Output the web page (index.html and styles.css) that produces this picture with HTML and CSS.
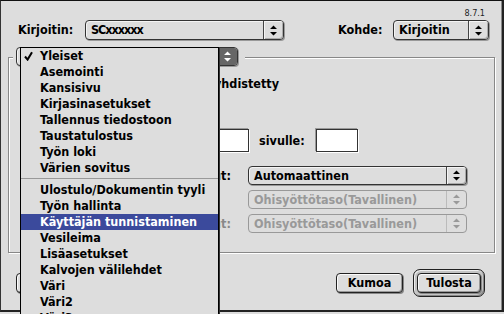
FILE: index.html
```html
<!DOCTYPE html>
<html lang="fi">
<head>
<meta charset="utf-8">
<title>Tulosta</title>
<link rel="stylesheet" href="styles.css">
</head>
<body>
<div class="window">
  <div class="version">8.7.1</div>
  <div class="toolbar">
    <span class="lbl lbl-printer">Kirjoitin:</span>
    <div class="popup popup-printer">
      <span class="popup-text tight">SCxxxxxx</span>
      <span class="popup-arrow"><svg width="7" height="11" viewBox="0 0 7 11"><path d="M3.5 0.5L7 4H0Z M0 7H7L3.5 10.5Z"/></svg></span>
    </div>
    <span class="lbl lbl-dest">Kohde:</span>
    <div class="popup popup-dest">
      <span class="popup-text">Kirjoitin</span>
      <span class="popup-arrow"><svg width="7" height="11" viewBox="0 0 7 11"><path d="M3.5 0.5L7 4H0Z M0 7H7L3.5 10.5Z"/></svg></span>
    </div>
  </div>

  <div class="group">
    <div class="group-head">
      <div class="popup popup-panel">
        <span class="popup-text">Yleiset</span>
        <span class="popup-arrow pressed"><svg width="7" height="11" viewBox="0 0 7 11"><path d="M3.5 0.5L7 4H0Z M0 7H7L3.5 10.5Z"/></svg></span>
      </div>
    </div>
    <div class="row-copies">yhdistetty</div>
    <div class="row-pages">
      <span class="field field-from"></span>
      <span class="lbl lbl-to">sivulle:</span>
      <span class="field field-to"></span>
    </div>
    <div class="row-src">
      <span class="src-lbl">Kaikki sivut:</span>
      <div class="popup popup-src">
        <span class="popup-text">Automaattinen</span>
        <span class="popup-arrow"><svg width="7" height="11" viewBox="0 0 7 11"><path d="M3.5 0.5L7 4H0Z M0 7H7L3.5 10.5Z"/></svg></span>
      </div>
    </div>
    <div class="row-src">
      <span class="src-lbl"></span>
      <div class="popup popup-src disabled">
        <span class="popup-text">Ohisyöttötaso(Tavallinen)</span>
        <span class="popup-arrow"><svg width="7" height="11" viewBox="0 0 7 11"><path d="M3.5 0.5L7 4H0Z M0 7H7L3.5 10.5Z"/></svg></span>
      </div>
    </div>
    <div class="row-src">
      <span class="src-lbl dim">Muut sivut:</span>
      <div class="popup popup-src disabled">
        <span class="popup-text">Ohisyöttötaso(Tavallinen)</span>
        <span class="popup-arrow"><svg width="7" height="11" viewBox="0 0 7 11"><path d="M3.5 0.5L7 4H0Z M0 7H7L3.5 10.5Z"/></svg></span>
      </div>
    </div>
  </div>

  <div class="buttons">
    <div class="btn btn-save">Tallenna asetukset</div>
    <span class="spacer"></span>
    <div class="btn btn-cancel">Kumoa</div>
    <div class="default-ring"><div class="btn btn-print">Tulosta</div></div>
  </div>
</div>

<ul class="menu">
  <li class="item"><span class="mark"><svg width="9" height="10" viewBox="0 0 9 10"><path d="M1 5.5L3.6 8.6L8 1.2" fill="none" stroke="#000" stroke-width="2"/></svg></span>Yleiset</li>
  <li class="item"><span class="mark"></span>Asemointi</li>
  <li class="item"><span class="mark"></span>Kansisivu</li>
  <li class="item"><span class="mark"></span>Kirjasinasetukset</li>
  <li class="item"><span class="mark"></span>Tallennus tiedostoon</li>
  <li class="item"><span class="mark"></span>Taustatulostus</li>
  <li class="item"><span class="mark"></span>Työn loki</li>
  <li class="item"><span class="mark"></span>Värien sovitus</li>
  <li class="sep"></li>
  <li class="item"><span class="mark"></span>Ulostulo/Dokumentin tyyli</li>
  <li class="item"><span class="mark"></span>Työn hallinta</li>
  <li class="item hl"><span class="mark"></span>Käyttäjän tunnistaminen</li>
  <li class="item"><span class="mark"></span>Vesileima</li>
  <li class="item"><span class="mark"></span>Lisäasetukset</li>
  <li class="item"><span class="mark"></span>Kalvojen välilehdet</li>
  <li class="item"><span class="mark"></span>Väri</li>
  <li class="item"><span class="mark"></span>Väri2</li>
  <li class="item"><span class="mark"></span>Väri3</li>
</ul>
</body>
</html>
```

FILE: styles.css
```css
html, body {
  margin: 0;
  padding: 0;
}
body {
  width: 504px;
  height: 314px;
  overflow: hidden;
  background: #dddddd;
}
.window, .menu {
  font-family: "DejaVu Sans Condensed", "DejaVu Sans", sans-serif;
  font-stretch: semi-condensed;
  font-weight: bold;
  font-size: 12.5px;
  line-height: 16px;
  color: #000;
}
.window {
  box-sizing: border-box;
  width: 504px;
  height: 312px;
  border-top: 1px solid #111;
  border-left: 1px solid #333;
  border-right: 2px solid #222;
  border-bottom: 2px solid #222;
  box-shadow: inset -1px 0 0 #888;
  background: #dddddd;
}
.version {
  box-sizing: border-box;
  height: 19px;
  padding: 7px 17px 0 0;
  text-align: right;
  font-family: "DejaVu Sans", sans-serif;
  font-weight: normal;
  font-size: 9px;
  line-height: 10px;
  color: #222;
}
.toolbar {
  display: flex;
  align-items: center;
  height: 20px;
  padding-left: 17px;
}
.lbl {
  white-space: nowrap;
}
.lbl-printer {
  width: 67px;
}
.lbl-dest {
  width: 55px;
  margin-left: 54px;
}
.popup {
  display: flex;
  box-sizing: border-box;
  height: 20px;
  border: 1px solid #333;
  border-radius: 4px;
  background: #dddddd;
  box-shadow: inset 1px 1px 0 #f4f4f4, 1px 1px 0 #999;
}
.popup-text {
  flex: 1;
  min-width: 0;
  padding-left: 5px;
  line-height: 18px;
  white-space: nowrap;
  overflow: hidden;
}
.tight {
  letter-spacing: -1px;
}
.popup-arrow {
  display: flex;
  align-items: center;
  justify-content: center;
  width: 19px;
  border-left: 1px solid #444;
  border-radius: 0 3px 3px 0;
  box-shadow: inset 1px 1px 0 #f4f4f4, inset -1px -1px 0 #aaa;
}
.popup-arrow svg {
  fill: #000;
}
.popup-printer {
  width: 199px;
}
.popup-dest {
  width: 96px;
}

.group {
  position: relative;
  box-sizing: border-box;
  width: 487px;
  height: 196px;
  margin: 17px 0 0 7px;
  border: 1px solid #888;
  box-shadow: 1px 1px 0 #fff, inset 1px 1px 0 #fff;
}
.group-head {
  position: absolute;
  left: 4px;
  top: -11px;
  padding: 0 7px 0 3px;
  background: #dddddd;
}
.popup-panel {
  width: 222px;
  height: 19px;
}
.popup-panel .popup-text {
  line-height: 17px;
}
.popup-arrow.pressed {
  background: #666;
  box-shadow: none;
}
.popup-arrow.pressed svg {
  fill: #fff;
}
.row-copies {
  margin-top: 18px;
  padding-left: 205px;
  line-height: 16px;
}
.row-pages {
  display: flex;
  align-items: center;
  height: 23px;
  margin-top: 37px;
}
.field {
  box-sizing: border-box;
  height: 23px;
  background: #fff;
  border: 1px solid #333;
  box-shadow: -1px -1px 0 #999, 1px 1px 0 #fff;
}
.field-from {
  width: 64px;
  margin-left: 176px;
}
.lbl-to {
  width: 57px;
  margin-left: 10px;
}
.field-to {
  width: 42px;
}
.row-src {
  display: flex;
  align-items: center;
  height: 19px;
  margin-top: 5px;
}
.row-src:nth-of-type(4) {
  margin-top: 14px;
}
.src-lbl {
  width: 222px;
  margin-right: 17px;
  text-align: right;
  white-space: nowrap;
  overflow: hidden;
}
.src-lbl.dim {
  color: #888;
}
.popup-src {
  width: 219px;
  height: 19px;
}
.popup-src .popup-text {
  line-height: 17px;
}
.popup.disabled {
  border-color: #999;
  box-shadow: none;
  color: #999;
}
.popup.disabled .popup-arrow {
  border-left-color: #bbb;
  box-shadow: none;
}
.popup.disabled .popup-arrow svg {
  fill: #999;
}

.buttons {
  display: flex;
  align-items: center;
  height: 20px;
  margin-top: 20px;
  padding: 0 17px 0 15px;
}
.spacer {
  flex: 1;
}
.btn {
  box-sizing: border-box;
  display: flex;
  align-items: center;
  justify-content: center;
  height: 20px;
  border: 1px solid #222;
  border-radius: 4px;
  background: #dddddd;
  box-shadow: inset 1px 1px 0 #fafafa, inset -1px -1px 0 #999, 1px 1px 0 #888;
  white-space: nowrap;
}
.btn-save {
  width: 130px;
}
.btn-cancel {
  width: 67px;
}
.default-ring {
  margin-left: 10px;
  padding: 3px;
  border: 1px solid #222;
  border-radius: 7px;
  background: #c4c4c4;
  box-shadow: inset 1px 1px 0 #eee, inset -1px -1px 0 #888;
}
.btn-print {
  width: 64px;
}

.menu {
  position: absolute;
  left: 20px;
  top: 47px;
  width: 199px;
  height: 300px;
  box-sizing: border-box;
  margin: 0;
  padding: 0;
  list-style: none;
  background: #dddddd;
  border: 1px solid #000;
  box-shadow: 1px 1px 0 #333;
}
.item {
  display: flex;
  align-items: center;
  height: 16px;
  padding-left: 3px;
  white-space: nowrap;
}
.mark {
  display: flex;
  align-items: center;
  width: 16px;
  height: 16px;
}
.item.hl {
  background: #3b4a9c;
  color: #fff;
}
.sep {
  height: 6px;
  box-sizing: border-box;
  border-top: 2px solid transparent;
  background: linear-gradient(#999, #999) 0 0 / 100% 1px no-repeat;
  background-origin: content-box;
  padding-top: 0;
}
```
